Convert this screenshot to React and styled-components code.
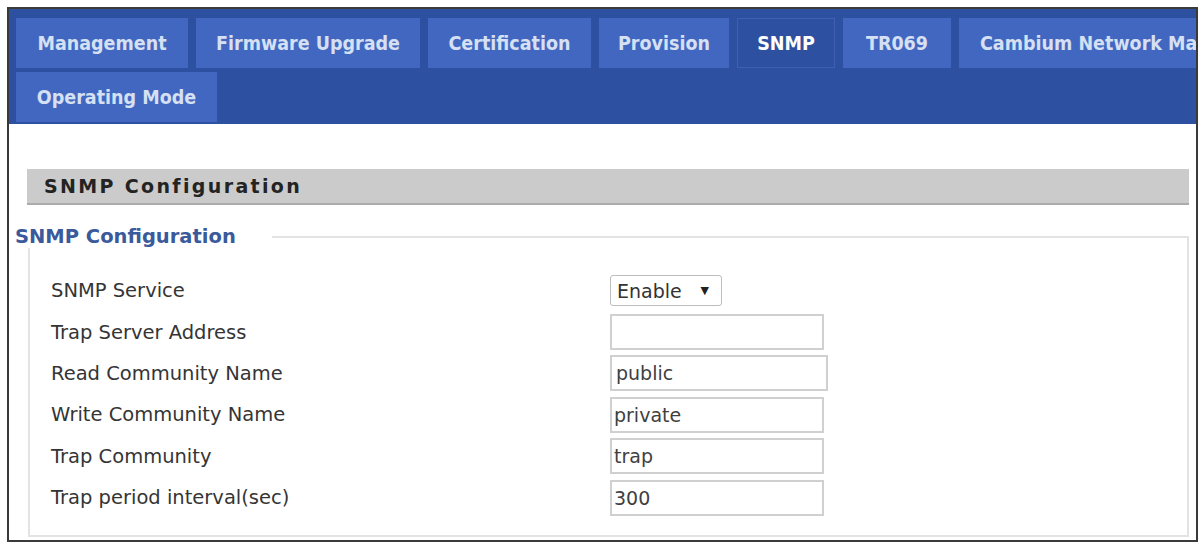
import React from "react";
import styled, { createGlobalStyle } from "styled-components";

const GlobalStyle = createGlobalStyle`
    body {
        margin: 0;
        background: #fff;
        font-family: "DejaVu Sans", Verdana, sans-serif;
    }
`

const Frame = styled.div`
    box-sizing: border-box;
    margin: 7px 3px 0 7px;
    height: 535px;
    border: 2px solid #3a3a3a;
    overflow: hidden;
    background: #fff;
`

const Header = styled.div`
    display: flex;
    flex-direction: column;
    gap: 4px;
    padding: 9px 0 2px 7px;
    background: #2d50a0;
    overflow: hidden;
`

const TabRow = styled.div`
    display: flex;
    gap: 8px;
    flex-wrap: nowrap;
`

const Tab = styled.div`
    box-sizing: border-box;
    flex-shrink: 0;
    display: flex;
    align-items: center;
    justify-content: ${props => props.$w ? "center" : "flex-start"};
    width: ${props => props.$w ? props.$w + "px" : "auto"};
    padding: ${props => props.$w ? "0" : "0 20px"};
    height: 50px;
    white-space: nowrap;
    font-family: "DejaVu Sans Condensed", "DejaVu Sans", sans-serif;
    font-weight: bold;
    font-size: 19.5px;
    color: ${props => props.$active ? "#ffffff" : "#d6e0f3"};
    background: ${props => props.$active ? "#2d50a0" : "#4267c0"};
    border: 1px solid ${props => props.$active ? "#3e60b2" : "#4267c0"};
`

const Content = styled.div`
    padding: 45px 7px 0 18px;
`

const SectionBar = styled.div`
    box-sizing: border-box;
    display: flex;
    align-items: center;
    height: 36px;
    padding-left: 17px;
    background: #cbcbcb;
    border-bottom: 2px solid #ababab;
    font-weight: bold;
    font-size: 19px;
    letter-spacing: 2.35px;
    color: #232323;
`

const Fieldset = styled.fieldset`
    margin: 20px 0 0 1px;
    padding: 22px 0 17px 21px;
    border: 2px solid #e3e3e3;
`

const Legend = styled.legend`
    margin-left: -36px;
    padding: 0 36px 0 0;
    font-weight: bold;
    font-size: 19.5px;
    color: #3b5a9c;
`

const Form = styled.div`
    display: grid;
    grid-template-columns: 559px auto;
    grid-auto-rows: 41.4px;
    align-items: center;
`

const Label = styled.div`
    font-size: 19.5px;
    color: #353535;
`

const Field = styled.div`
    display: flex;
    align-items: center;
`

const Input = styled.div`
    box-sizing: border-box;
    display: flex;
    align-items: center;
    width: ${props => props.$w}px;
    height: 36px;
    padding-left: ${props => props.$pad || 2}px;
    border: 2px solid #d0d0d0;
    font-size: 19px;
    color: #404040;
`

const SelectBox = styled.div`
    box-sizing: border-box;
    display: flex;
    align-items: center;
    justify-content: space-between;
    width: 112px;
    height: 31px;
    padding: 0 12px 0 6px;
    border: 1.5px solid #bdbdbd;
    border-radius: 3px;
    font-size: 19px;
    color: #333;
`

const Arrow = styled.span`
    font-size: 11px;
    color: #222;
`

const tabs = [
    { name: "Management", w: 172 },
    { name: "Firmware Upgrade", w: 224 },
    { name: "Certification", w: 163 },
    { name: "Provision", w: 130 },
    { name: "SNMP", w: 98, active: true },
    { name: "TR069", w: 108 },
    { name: "Cambium Network Manager" },
]

const fields = [
    { label: "Trap Server Address", value: "", w: 214 },
    { label: "Read Community Name", value: "public", w: 218, pad: 4 },
    { label: "Write Community Name", value: "private", w: 214 },
    { label: "Trap Community", value: "trap", w: 214 },
    { label: "Trap period interval(sec)", value: "300", w: 214 },
]

const App = () => {
    return (
        <>
            <GlobalStyle />
            <Frame>
                <Header>
                    <TabRow>
                        {tabs.map(t => (
                            <Tab key={t.name} $w={t.w} $active={t.active}>{t.name}</Tab>
                        ))}
                    </TabRow>
                    <TabRow>
                        <Tab $w={201}>Operating Mode</Tab>
                    </TabRow>
                </Header>
                <Content>
                    <SectionBar>SNMP Configuration</SectionBar>
                    <Fieldset>
                        <Legend>SNMP Configuration</Legend>
                        <Form>
                            <Label>SNMP Service</Label>
                            <Field>
                                <SelectBox>Enable<Arrow>▼</Arrow></SelectBox>
                            </Field>
                            {fields.map(f => (
                                <React.Fragment key={f.label}>
                                    <Label>{f.label}</Label>
                                    <Field>
                                        <Input $w={f.w} $pad={f.pad}>{f.value}</Input>
                                    </Field>
                                </React.Fragment>
                            ))}
                        </Form>
                    </Fieldset>
                </Content>
            </Frame>
        </>
    )
}
export default App;
